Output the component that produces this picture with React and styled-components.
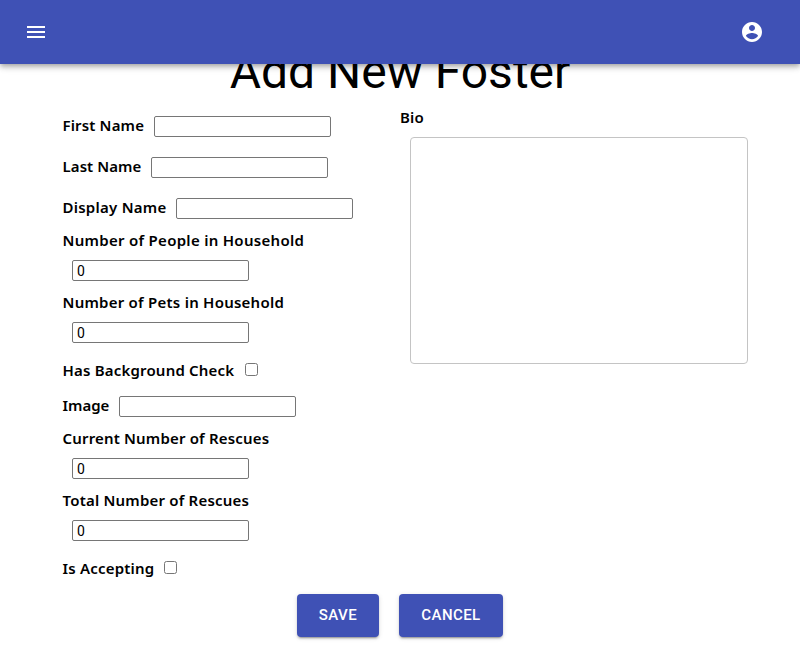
import React from 'react';
import styled, { createGlobalStyle } from 'styled-components';

const GlobalStyle = createGlobalStyle`
  *, *::before, *::after { box-sizing: border-box; }
  html, body { margin: 0; background: #fff; overflow: hidden; }
`;

const Page = styled.div`
  height: 647px;
  color: #000;
  font-family: 'Noto Sans', sans-serif;
`;

const AppBar = styled.header`
  position: relative;
  z-index: 1;
  display: flex;
  align-items: center;
  justify-content: space-between;
  height: 64px;
  padding: 0 36px 0 24px;
  background: #3f51b5;
  box-shadow: 0 2px 4px -1px rgba(0, 0, 0, 0.2), 0 4px 5px 0 rgba(0, 0, 0, 0.14),
    0 1px 10px 0 rgba(0, 0, 0, 0.12);
`;

const IconButton = styled.button`
  display: flex;
  padding: 0;
  border: 0;
  background: none;
  color: #fff;

  svg {
    width: 24px;
    height: 24px;
    fill: currentColor;
  }
`;

const Title = styled.h1`
  height: 56px;
  margin: -20px 0 0;
  font: 400 48px/56px Roboto, sans-serif;
  text-align: center;
`;

const Columns = styled.div`
  display: grid;
  grid-template-columns: 338px 348px;
  height: 484px;
  margin: 0 52px 0 62px;
  padding-top: 6px;
`;

const Column = styled.div`
  display: flex;
  flex-direction: column;
`;

const Field = styled.div`
  display: ${(p) => (p.$stacked ? 'block' : 'flex')};
  align-items: center;
  height: ${(p) => (p.$stacked ? 62 : p.$check ? 33 : 41)}px;
`;

const Label = styled.label`
  display: block;
  width: ${(p) => p.$width}px;
  height: 21px;
  padding-left: 0.5px;
  font-size: 15px;
  font-weight: 600;
  line-height: ${(p) => (p.$lowered ? 23 : 19)}px;
  letter-spacing: ${(p) => p.$tracking || 0}px;
  white-space: nowrap;
`;

const Input = styled.input`
  display: block;
  width: 177px;
  height: 21px;
  margin: 10px;
  padding: 1px 4px;
  border: 1px solid #767676;
  border-radius: 2px;
  background: #fff;
  color: #000;
  font: 14px/17px Roboto, sans-serif;
  letter-spacing: 0;
  outline: 0;
`;

const Checkbox = styled.input`
  width: 13px;
  height: 13px;
  margin: 10px;
`;

const BioLabel = styled(Label)`
  margin-top: 2px;
  padding-left: 0;
`;

const BioArea = styled.textarea`
  display: block;
  width: 338px;
  height: 227px;
  margin: 8px 10px 10px;
  border: 1px solid #c4c4c4;
  border-radius: 4px;
  resize: none;
  outline: 0;
`;

const Actions = styled.div`
  display: flex;
  justify-content: center;
  gap: 20px;
  padding-top: 10px;
`;

const Button = styled.button`
  width: ${(p) => p.$width}px;
  height: 42.6px;
  padding: 0;
  border: 0;
  border-radius: 4px;
  background: #3f51b5;
  color: #fff;
  font: 500 15px/26.25px Roboto, sans-serif;
  letter-spacing: 0.429px;
  text-transform: uppercase;
  box-shadow: 0 3px 1px -2px rgba(0, 0, 0, 0.2), 0 2px 2px 0 rgba(0, 0, 0, 0.14),
    0 1px 5px 0 rgba(0, 0, 0, 0.12);
`;

const fields = [
  { label: 'First Name', width: 82, tracking: 0.15 },
  { label: 'Last Name', width: 79, tracking: 0.08 },
  { label: 'Display Name', width: 104, tracking: 0.25 },
  { label: 'Number of People in Household', width: 242, tracking: 0.29, stacked: true },
  { label: 'Number of Pets in Household', width: 222, tracking: 0.24, stacked: true },
  { label: 'Has Background Check', width: 173, tracking: 0.19, check: true },
  { label: 'Image', width: 47 },
  { label: 'Current Number of Rescues', width: 207, tracking: 0.17, stacked: true },
  { label: 'Total Number of Rescues', width: 187, tracking: 0.2, stacked: true },
  { label: 'Is Accepting', width: 92, tracking: 0.2, check: true },
];

export default function App() {
  return (
    <Page>
      <GlobalStyle />
      <AppBar>
        <IconButton aria-label="Menu">
          <svg viewBox="0 0 24 24">
            <path d="M3 18h18v-2H3v2zm0-5h18v-2H3v2zm0-7v2h18V6H3z" />
          </svg>
        </IconButton>
        <IconButton aria-label="Account">
          <svg viewBox="0 0 24 24">
            <path d="M12 2C6.48 2 2 6.48 2 12s4.48 10 10 10 10-4.48 10-10S17.52 2 12 2zm0 3c1.66 0 3 1.34 3 3s-1.34 3-3 3-3-1.34-3-3 1.34-3 3-3zm0 14.2c-2.5 0-4.71-1.28-6-3.22.03-1.99 4-3.08 6-3.08 1.99 0 5.97 1.09 6 3.08-1.29 1.94-3.5 3.22-6 3.22z" />
          </svg>
        </IconButton>
      </AppBar>
      <Title>Add New Foster</Title>
      <Columns>
        <Column>
          {fields.map((f) => (
            <Field key={f.label} $stacked={f.stacked} $check={f.check}>
              <Label $width={f.width} $tracking={f.tracking} $lowered={f.stacked || f.check}>
                {f.label}
              </Label>
              {f.check ? <Checkbox type="checkbox" /> : <Input defaultValue={f.stacked ? '0' : ''} />}
            </Field>
          ))}
        </Column>
        <Column>
          <BioLabel $width={25} $tracking={0.2}>Bio</BioLabel>
          <BioArea />
        </Column>
      </Columns>
      <Actions>
        <Button $width={82}>Save</Button>
        <Button $width={104}>Cancel</Button>
      </Actions>
    </Page>
  );
}
